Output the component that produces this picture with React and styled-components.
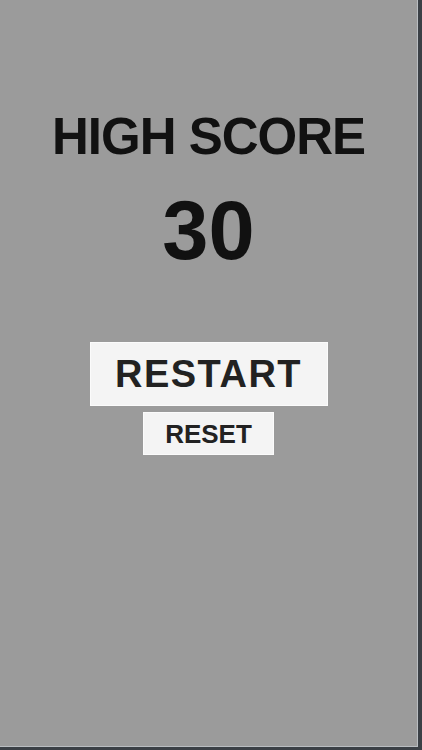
import styled, { createGlobalStyle } from 'styled-components';

const Global = createGlobalStyle`
  html, body {
    margin: 0;
    padding: 0;
    background: #3b4046;
    overflow: hidden;
  }
`;

const Screen = styled.div`
  width: 418px;
  height: 747px;
  background: #9b9b9b;
  border-right: 1px solid #b9bdc1;
  border-bottom: 1px solid #b9bdc1;
  display: flex;
  flex-direction: column;
  align-items: center;
  padding-top: 111px;
  box-sizing: border-box;
  font-family: "Liberation Sans", Arial, sans-serif;
`;

const Title = styled.h1`
  margin: 0;
  font-size: 51px;
  line-height: 1;
  font-weight: 700;
  letter-spacing: -1px;
  color: #111;
`;

const Score = styled.div`
  margin-top: 27px;
  font-size: 83px;
  line-height: 1;
  font-weight: 700;
  color: #111;
`;

const Button = styled.button`
  display: flex;
  align-items: center;
  justify-content: center;
  width: ${p => p.$w}px;
  height: ${p => p.$h}px;
  margin-top: ${p => p.$top}px;
  padding: 0;
  background: #f4f4f4;
  border: 1px solid #fbfbfb;
  border-radius: 0;
  font-family: inherit;
  font-weight: 700;
  font-size: ${p => p.$size}px;
  line-height: 1;
  letter-spacing: ${p => p.$ls}px;
  color: #222;
  cursor: pointer;
`;

const App = () => {
  return (
    <>
      <Global />
      <Screen>
        <Title>HIGH SCORE</Title>
        <Score>30</Score>
        <Button $w={238} $h={64} $top={70} $size={38} $ls={1.5}>RESTART</Button>
        <Button $w={131} $h={43} $top={6} $size={26} $ls={0}>RESET</Button>
      </Screen>
    </>
  )
}

export default App;
